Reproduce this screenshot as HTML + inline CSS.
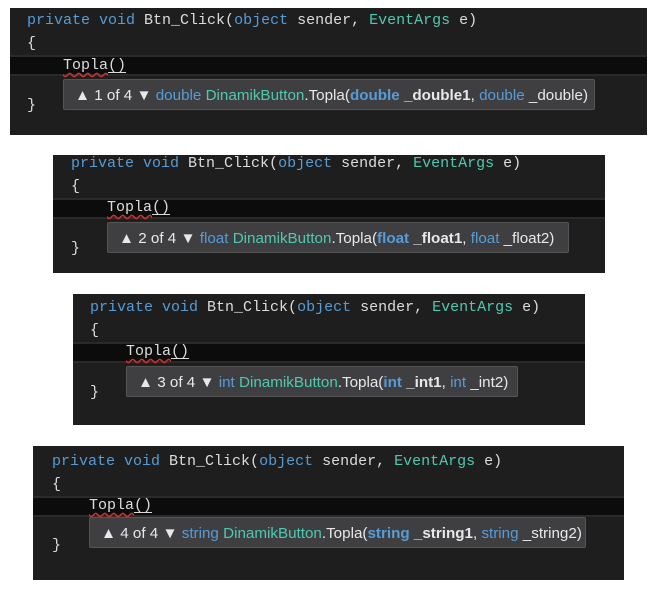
<!DOCTYPE html>
<html><head><meta charset="utf-8"><style>
body{margin:0;background:#fff;width:658px;height:591px;position:relative;overflow:hidden}
.p{position:absolute;background:#1e1e1e}
.l{position:absolute;font-family:"Liberation Mono",monospace;font-size:15px;color:#dcdcdc;white-space:pre;line-height:20px}
.k{color:#569cd6}.t{color:#4ec9b0}
.band{position:absolute;left:0;right:0;height:17px;background:#0c0c0c;border-top:2px solid #2a2a2a;border-bottom:2px solid #2a2a2a}
.tp{position:absolute;height:31px;background:#3f3f42;border:1px solid #555;border-radius:2px;font-family:"Liberation Sans",sans-serif;font-size:15.2px;color:#e8e8e8;line-height:31px;white-space:pre;padding-left:11px;box-sizing:border-box}
.b{font-weight:bold}
.w{text-decoration:underline wavy #d03030;text-underline-offset:3px}
.u{text-decoration:underline;text-underline-offset:3px}
</style></head><body>

<div class="p" style="left:10px;top:8px;width:637px;height:127px">
<div class="l" style="left:17px;top:3px"><span class="k">private void</span> Btn_Click(<span class="k">object</span> sender, <span class="t">EventArgs</span> e)</div>
<div class="l" style="left:17px;top:26px">{</div>
<div class="band" style="top:47px"></div>
<div class="l" style="left:53px;top:48px"><span class="w">Topla</span><span class="u">()</span></div>
<div class="tp" style="left:53px;top:71px;width:532px">▲ 1 of 4 ▼ <span class="k">double</span> <span class="t">DinamikButton</span>.Topla(<span class="b"><span class="k">double</span> _double1</span>, <span class="k">double</span> _double)</div>
<div class="l" style="left:17px;top:88px">}</div>
</div>

<div class="p" style="left:53px;top:155px;width:552px;height:118px">
<div class="l" style="left:18px;top:-1px"><span class="k">private void</span> Btn_Click(<span class="k">object</span> sender, <span class="t">EventArgs</span> e)</div>
<div class="l" style="left:18px;top:22px">{</div>
<div class="band" style="top:43px"></div>
<div class="l" style="left:54px;top:43px"><span class="w">Topla</span><span class="u">()</span></div>
<div class="tp" style="left:54px;top:67px;width:462px">▲ 2 of 4 ▼ <span class="k">float</span> <span class="t">DinamikButton</span>.Topla(<span class="b"><span class="k">float</span> _float1</span>, <span class="k">float</span> _float2)</div>
<div class="l" style="left:18px;top:84px">}</div>
</div>

<div class="p" style="left:73px;top:294px;width:512px;height:131px">
<div class="l" style="left:17px;top:4px"><span class="k">private void</span> Btn_Click(<span class="k">object</span> sender, <span class="t">EventArgs</span> e)</div>
<div class="l" style="left:17px;top:27px">{</div>
<div class="band" style="top:48px"></div>
<div class="l" style="left:53px;top:48px"><span class="w">Topla</span><span class="u">()</span></div>
<div class="tp" style="left:53px;top:72px;width:392px">▲ 3 of 4 ▼ <span class="k">int</span> <span class="t">DinamikButton</span>.Topla(<span class="b"><span class="k">int</span> _int1</span>, <span class="k">int</span> _int2)</div>
<div class="l" style="left:17px;top:89px">}</div>
</div>

<div class="p" style="left:33px;top:446px;width:591px;height:134px">
<div class="l" style="left:19px;top:6px"><span class="k">private void</span> Btn_Click(<span class="k">object</span> sender, <span class="t">EventArgs</span> e)</div>
<div class="l" style="left:19px;top:29px">{</div>
<div class="band" style="top:50px"></div>
<div class="l" style="left:56px;top:50px"><span class="w">Topla</span><span class="u">()</span></div>
<div class="tp" style="left:56px;top:71px;width:497px">▲ 4 of 4 ▼ <span class="k">string</span> <span class="t">DinamikButton</span>.Topla(<span class="b"><span class="k">string</span> _string1</span>, <span class="k">string</span> _string2)</div>
<div class="l" style="left:19px;top:90px">}</div>
</div>

</body></html>
